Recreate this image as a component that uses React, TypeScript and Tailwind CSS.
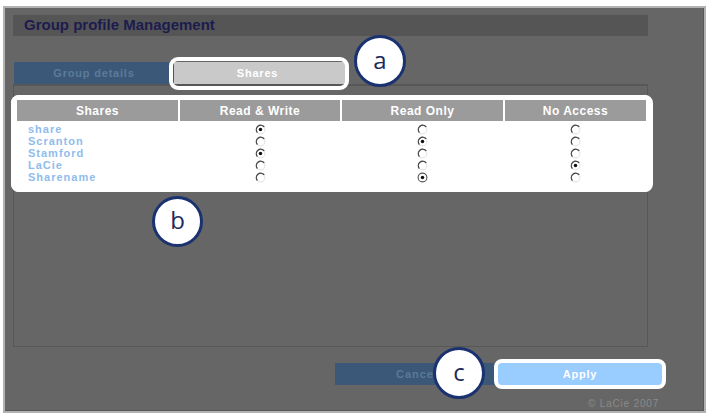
import React from "react";

type Access = "rw" | "ro" | "na";

const rows: { name: string; sel: Access; focus?: boolean }[] = [
  { name: "share", sel: "rw" },
  { name: "Scranton", sel: "ro" },
  { name: "Stamford", sel: "rw" },
  { name: "LaCie", sel: "na" },
  { name: "Sharename", sel: "ro", focus: true },
];

function Radio({ checked, focus }: { checked: boolean; focus?: boolean }) {
  return (
    <svg width="11" height="11" viewBox="0 0 10 10" className="block">
      {focus ? (
        <circle cx="5" cy="5" r="4" fill="none" stroke="#555" strokeWidth="1" />
      ) : (
        <>
          <circle cx="5" cy="5" r="4" fill="none" stroke="#e4e4e4" strokeWidth="1" />
          <path d="M2.2 7.8 A4 4 0 0 1 8.4 2.6" fill="none" stroke="#444" strokeWidth="1.2" />
        </>
      )}
      {checked && <circle cx="5" cy="5" r="1.6" fill="#111" />}
    </svg>
  );
}

function Badge({ letter, cls }: { letter: string; cls: string }) {
  return (
    <div
      className={`absolute ${cls} rounded-full bg-white border-[3px] border-[#1b3270] flex items-center justify-center text-[24px] leading-none text-[#1b2a5a] pb-[3px]`}
      style={{ fontFamily: "'Open Sans', 'DejaVu Sans', sans-serif" }}
    >
      {letter}
    </div>
  );
}

export default function App() {
  return (
    <div
      className="relative w-[709px] h-[420px] bg-white pt-[6px] pl-[3px] overflow-hidden"
      style={{ fontFamily: "'Liberation Sans', Arial, sans-serif" }}
    >
      <div className="w-[703px] h-[407px] border-2 border-[#b2b2b2] bg-[#666666]">
        <div className="w-full h-full border-r border-b border-[#575757] flex flex-col">
          {/* title bar */}
          <div className="ml-[8px] mt-[7px] w-[635px] h-[21px] bg-[#555555] flex items-center pl-[11px]">
            <span className="text-[15px] font-bold text-[#1c1c4e]">
              Group profile Management
            </span>
          </div>

          {/* tabs */}
          <div className="ml-[9px] mt-[26px] flex h-[22px]">
            <div className="w-[160px] h-full bg-[#3b5878] flex items-center justify-center text-[11px] font-bold text-[#5d7b9b] tracking-[0.8px]">
              Group details
            </div>
            <div className="w-[171px] h-full bg-[#c9c9c9] flex items-center justify-center text-[11px] font-bold text-white tracking-[0.8px] pr-[4px]">
              Shares
            </div>
          </div>

          {/* panel */}
          <div className="ml-[8px] w-[635px] h-[263px] border border-t-2 border-[#575757]">
            <div className="-ml-[3px] mt-[9px] w-[641px] bg-white rounded-[8px] pt-[5px] pl-[6px] pr-[6px] pb-[9px]">
              <div className="grid grid-cols-[161px_160px_161px_141px] gap-x-[2px]">
                {["Shares", "Read & Write", "Read Only", "No Access"].map((h) => (
                  <div
                    key={h}
                    className="h-[21px] bg-[#9b9b9b] flex items-center justify-center text-[12px] font-bold text-white tracking-[0.5px]"
                  >
                    {h}
                  </div>
                ))}
              </div>
              <div className="mt-[2px]">
                {rows.map((r) => (
                  <div
                    key={r.name}
                    className="grid grid-cols-[161px_160px_161px_141px] gap-x-[2px] h-[12px] items-center"
                  >
                    <div className="pl-[11px] text-[11px] leading-[12px] font-bold text-[#8fbcec] tracking-[1px]">
                      {r.name}
                    </div>
                    <div className="flex justify-center">
                      <Radio checked={r.sel === "rw"} />
                    </div>
                    <div className="flex justify-center">
                      <Radio checked={r.sel === "ro"} focus={r.focus} />
                    </div>
                    <div className="flex justify-center">
                      <Radio checked={r.sel === "na"} />
                    </div>
                  </div>
                ))}
              </div>
            </div>
          </div>

          {/* buttons */}
          <div className="mt-[16px] pl-[330px] flex h-[22px]">
            <div className="w-[160px] h-full bg-[#3b5878] flex items-center justify-center text-[11px] font-bold text-[#5a7898] tracking-[1px] pl-[4px]">
              Cancel
            </div>
            <div className="ml-[3px] w-[164px] h-full bg-[#99ccff] flex items-center justify-center text-[11px] font-bold text-white tracking-[0.8px]">
              Apply
            </div>
          </div>

          {/* copyright */}
          <div className="mt-[13px] pr-[44px] flex justify-end text-[10px] leading-[12px] text-[#8a8a8a] tracking-[0.8px]">
            © LaCie 2007
          </div>
        </div>
      </div>

      {/* annotation highlights */}
      <div className="absolute left-[169px] top-[57px] w-[180px] h-[33px] border-[4px] border-white rounded-[9px]" />
      <div className="absolute left-[11px] top-[95px] w-[642px] h-[97px] border-[2px] border-white rounded-[8px]" />
      <div className="absolute left-[494px] top-[359px] w-[172px] h-[30px] border-[4px] border-white rounded-[8px]" />

      <Badge letter="a" cls="left-[354px] top-[35px] w-[52px] h-[52px]" />
      <Badge letter="b" cls="left-[152px] top-[196px] w-[51px] h-[51px]" />
      <Badge letter="c" cls="left-[433px] top-[347px] w-[52px] h-[52px]" />
    </div>
  );
}
